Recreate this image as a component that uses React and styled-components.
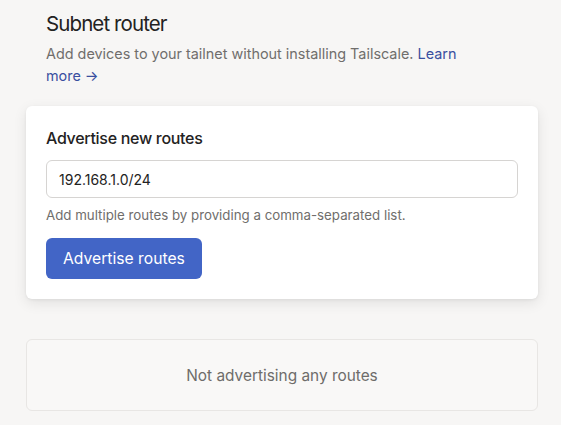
import React, { useState } from "react";
import styled, { createGlobalStyle } from "styled-components";

const GlobalStyle = createGlobalStyle`
  html, body { margin: 0; padding: 0; background: #f7f6f5; }
  body { font-family: Inter, "Noto Sans", sans-serif; color: #232222; -webkit-font-smoothing: antialiased; }
  * { box-sizing: border-box; }
`;

export default function App() {
  const [routes, setRoutes] = useState("192.168.1.0/24");

  return (
    <Page>
      <GlobalStyle />
      <Header>
        <Title>Subnet router</Title>
        <Lead>
          Add devices to your tailnet without installing Tailscale. <Link href="#">Learn more →</Link>
        </Lead>
      </Header>

      <Card>
        <CardTitle>Advertise new routes</CardTitle>
        <Input value={routes} onChange={(e) => setRoutes(e.target.value)} />
        <Hint>Add multiple routes by providing a comma-separated list.</Hint>
        <Button type="button">Advertise routes</Button>
      </Card>

      <Empty>Not advertising any routes</Empty>
    </Page>
  );
}

const Page = styled.div`
  width: 561px;
  min-height: 425px;
  padding: 10px 23px 0 26px;
`;

const Header = styled.div`
  padding: 0 20px;
  margin-bottom: 19px;
`;

const Title = styled.h1`
  margin: 0 0 5px;
  font-size: 20.5px;
  line-height: 28px;
  font-weight: 400;
  letter-spacing: -0.9px;
  color: #232222;
`;

const Lead = styled.p`
  margin: 0;
  max-width: 430px;
  font-size: 14.4px;
  line-height: 22px;
  color: #706e6c;
`;

const Link = styled.a`
  color: #3a4fa0;
  text-decoration: none;
`;

const Card = styled.div`
  display: flex;
  flex-direction: column;
  align-items: flex-start;
  background: #fff;
  border-radius: 6px;
  padding: 20px;
  box-shadow: 0 4px 14px rgba(0, 0, 0, 0.09), 0 1px 3px rgba(0, 0, 0, 0.06);
`;

const CardTitle = styled.h2`
  margin: 0 0 10px;
  font-size: 16px;
  line-height: 24px;
  font-weight: 500;
  letter-spacing: -0.3px;
  color: #232222;
`;

const Input = styled.input`
  width: 100%;
  height: 38px;
  padding: 0 12px;
  border: 1px solid #d6d4d2;
  border-radius: 6px;
  font-family: inherit;
  font-size: 14px;
  color: #232222;
  outline: none;
`;

const Hint = styled.p`
  margin: 7px 0 13px;
  font-size: 13.3px;
  line-height: 20px;
  color: #706e6c;
`;

const Button = styled.button`
  height: 41px;
  padding: 0 17px;
  border: none;
  border-radius: 6px;
  background: #4265c6;
  color: #fff;
  font-family: inherit;
  font-size: 15.7px;
  font-weight: 400;
  cursor: pointer;
`;

const Empty = styled.div`
  margin-top: 40px;
  height: 72px;
  display: flex;
  align-items: center;
  justify-content: center;
  border: 1px solid #e8e6e4;
  border-radius: 6px;
  background: #f9f8f7;
  font-size: 15.4px;
  color: #6e6c6a;
`;
